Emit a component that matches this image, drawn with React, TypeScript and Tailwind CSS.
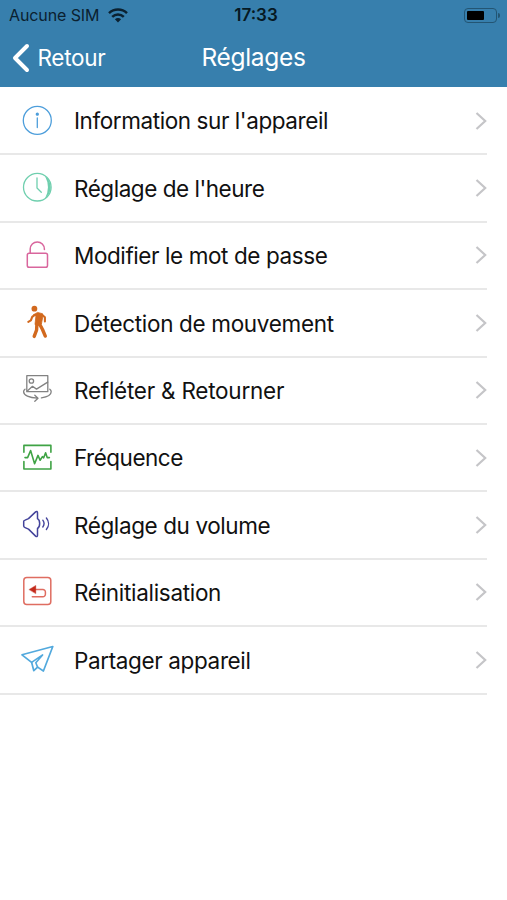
import type { ReactNode } from "react";

type Setting = {
  label: string;
  color: string;
  tracking: string;
  icon: ReactNode;
};

const settings: Setting[] = [
  {
    label: "Information sur l'appareil",
    color: "text-[#4d9edb]",
    tracking: "tracking-[-0.42px]",
    icon: (
      <>
        <circle cx="18.3" cy="17.4" r="14" />
        <path d="M18.3 15v9.5" />
        <circle cx="18.3" cy="11.2" r="1" fill="currentColor" />
      </>
    ),
  },
  {
    label: "Réglage de l'heure",
    color: "text-[#6fcfae]",
    tracking: "tracking-[-0.47px]",
    icon: (
      <>
        <circle cx="18.3" cy="17.2" r="13.8" />
        <path d="M26 6a13.8 13.8 0 0 1 0 22.4a24 24 0 0 0 0-22.4z" fill="currentColor" stroke="none" />
        <path d="M18 8v10l4.3 4.2" />
      </>
    ),
  },
  {
    label: "Modifier le mot de passe",
    color: "text-[#d9669d]",
    tracking: "tracking-[-0.41px]",
    icon: (
      <>
        <rect x="8.3" y="16.3" width="20.2" height="14" rx="1.8" strokeWidth="1.5" />
        <path d="M11.2 16v-4a7.1 7.1 0 0 1 14.2 0v.6" strokeWidth="1.5" />
      </>
    ),
  },
  {
    label: "Détection de mouvement",
    color: "text-[#d2691e]",
    tracking: "tracking-[-0.33px]",
    icon: (
      <>
        <circle cx="15.4" cy="3.7" r="2.9" fill="currentColor" stroke="none" />
        <path
          d="M14.6 9.8l3.9-2.4 5 1.3.4 2.6-1.5 7.8-6.4.5.9-8.5z"
          fill="currentColor"
          strokeWidth="0.8"
        />
        <path d="M15.8 9.8l-2.6 2-1.3 3.6-2.6 1.4M23 9.8l2.9 2.5v4.2" strokeWidth="2.1" />
        <path d="M17.9 18.5l-.3 6.5-2.4 6.4M20.3 18.5l3.2 6 2.8 6.6" strokeWidth="3.4" />
      </>
    ),
  },
  {
    label: "Refléter & Retourner",
    color: "text-[#828282]",
    tracking: "tracking-[-0.24px]",
    icon: (
      <>
        <rect x="7.8" y="3.7" width="21" height="16" />
        <circle cx="12.4" cy="9" r="2.2" />
        <path d="M8.3 19l5.2-4.7 4 2.8 11.2-7" />
        <path d="M6 17.2c-1 .7-1.4 1.5-1.4 2.6 0 3.4 5.6 6 13.8 6.4M15.8 23.2l3.2 3-3.2 3M30.8 17.2c1 .7 1.4 1.5 1.4 2.6 0 2.8-4 5.2-9.8 6.1" />
      </>
    ),
  },
  {
    label: "Fréquence",
    color: "text-[#3fa345]",
    tracking: "tracking-[-0.5px]",
    icon: (
      <>
        <path d="M4.9 12.3V5.4h27v6.9M4.9 21.6v7.4h27v-7.4" strokeWidth="1.6" />
        <path d="M6 17.6h2.6l3-7 4 13.2 3.4-8.4 2.1 4.8 2.3-3.6 1.3 1.2 1.9-5 1.6 4.8h2.2" strokeWidth="1.6" />
      </>
    ),
  },
  {
    label: "Réglage du volume",
    color: "text-[#43439b]",
    tracking: "tracking-[-0.4px]",
    icon: (
      <>
        <path
          d="M4.7 14.6c0-.8.4-1.2 1.4-1.5l3.4-1.5 7.1-6.7c1-.9 1.9-.5 1.9.8v6c2.9 1.6 2.9 8.2 0 9.8v6.8c0 1.3-.9 1.7-1.9.8l-7.1-7-3.4-1.5c-1-.4-1.4-.8-1.4-1.6z"
          strokeWidth="1.5"
        />
        <path d="M23.8 13.2c1.5 2 1.5 4.8 0 6.8M27.4 11c2.8 3.4 2.8 8.1 0 11.5" strokeWidth="1.4" />
      </>
    ),
  },
  {
    label: "Réinitialisation",
    color: "text-[#df6d61]",
    tracking: "tracking-[-0.3px]",
    icon: (
      <>
        <rect x="4.8" y="3.6" width="27" height="26.8" rx="3" strokeWidth="1.5" />
        <path d="M16.5 15.6h7.4a2.5 2.5 0 0 1 2.5 2.5v2.2a2.5 2.5 0 0 1-2.5 2.5H13.3" strokeWidth="1.5" />
        <path d="M10.2 15.4l6.6-4v8z" fill="#c32b1c" stroke="#c32b1c" strokeWidth="0.4" />
      </>
    ),
  },
  {
    label: "Partager appareil",
    color: "text-[#52a9dd]",
    tracking: "tracking-[-0.37px]",
    icon: (
      <>
        <path d="M3 12.8l30.8-8.3-9.4 24.5-5.8-3.9-3.8 3.6-2.2-8.4z" strokeWidth="1.7" />
        <path d="M12.6 20.3l11-7.4-6.8 7.9 1.8 4.3" strokeWidth="1.6" />
      </>
    ),
  },
];

function StatusBar() {
  return (
    <div className="grid h-[30px] grid-cols-3 items-center text-[16px] leading-none text-[#0b2130]">
      <div className="flex items-center gap-[9px] pl-[9px]">
        <span className="whitespace-nowrap tracking-[-0.1px]">Aucune SIM</span>
        <svg className="h-[15px] w-[20px] shrink-0" viewBox="0 0 20 15" fill="none" stroke="currentColor" strokeWidth="2.5">
          <path d="M1 5.2c5-4.8 13-4.8 18 0M4.2 8.8c3.3-3.2 8.3-3.2 11.6 0" />
          <path d="M6.9 11.2c1.8-1.6 4.4-1.6 6.2 0L10 14.4z" fill="currentColor" stroke="none" />
        </svg>
      </div>
      <span className="pl-[5px] text-center text-[17px] font-semibold text-[#061923]">17:33</span>
      <div className="flex items-center justify-end pr-[7px]">
        <div className="h-[15px] w-[33px] rounded-[4px] border border-[#235573] p-[2px]">
          <div className="h-full w-[17px] rounded-[1px] bg-black" />
        </div>
        <div className="ml-px h-[5px] w-[2px] rounded-r bg-[#235573]" />
      </div>
    </div>
  );
}

function NavBar() {
  return (
    <div className="grid h-[55px] grid-cols-[1fr_auto_1fr] items-center text-white">
      <button className="flex items-center gap-[7.5px] pl-[12px] text-[22.5px] leading-none tracking-[-0.3px]">
        <svg className="h-[30px] w-[18px]" viewBox="0 0 18 30" fill="none" stroke="currentColor" strokeWidth="4" strokeLinecap="round" strokeLinejoin="round">
          <path d="M15 3L3 15l12 12" />
        </svg>
        <span className="pt-[2px]">Retour</span>
      </button>
      <h1 className="text-[24.5px] leading-none tracking-[-0.3px]">Réglages</h1>
    </div>
  );
}

function SettingRow({ label, color, tracking, icon }: Setting) {
  return (
    <li className="mr-[20px] flex h-[67.4px] items-center border-b-2 border-[#e8e8e8] pl-[19px]">
      <svg
        className={`size-[36px] shrink-0 ${color}`}
        viewBox="0 0 36 36"
        fill="none"
        stroke="currentColor"
        strokeWidth="1.3"
        strokeLinejoin="round"
        strokeLinecap="round"
      >
        {icon}
      </svg>
      <span className={`ml-[19px] flex-1 whitespace-nowrap pt-[2px] text-[22.5px] leading-none ${tracking}`}>{label}</span>
      <svg className="h-[20px] w-[12px] shrink-0" viewBox="0 0 12 20" fill="none" stroke="#c5c5c8" strokeWidth="2.2">
        <path d="M1.5 2l8.7 8-8.7 8" />
      </svg>
    </li>
  );
}

export default function App() {
  return (
    <div className="h-[900px] w-[507px] overflow-hidden bg-white font-['Inter',sans-serif] text-[#111]">
      <header className="h-[87px] bg-[#377fad]">
        <StatusBar />
        <NavBar />
      </header>
      <ul className="pt-[1px]">
        {settings.map((s) => (
          <SettingRow key={s.label} {...s} />
        ))}
      </ul>
    </div>
  );
}
